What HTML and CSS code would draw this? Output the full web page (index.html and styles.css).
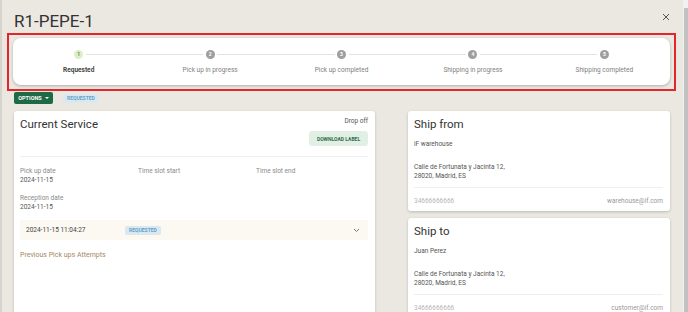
FILE: index.html
```html
<!DOCTYPE html>
<html lang="en">
<head>
    <meta charset="UTF-8">
    <meta name="viewport" content="width=device-width, initial-scale=1.0">
    <title>R1-PEPE-1</title>
    <link rel="stylesheet" href="styles.css">
</head>
<body>
    <div class="page">
        <div class="dialog-header">
            <h1 class="dialog-title">R1-PEPE-1</h1>
            <svg class="dialog-close" width="8" height="8" viewBox="0 0 8 8">
                <path d="M1 1 L7 7 M7 1 L1 7" stroke="#555" stroke-width="1" fill="none"/>
            </svg>
        </div>

        <div class="highlight">
            <div class="stepper">
                <div class="step active">
                    <div class="step-dot">1</div>
                    <div class="step-label">Requested</div>
                </div>
                <div class="step">
                    <div class="step-dot">2</div>
                    <div class="step-label">Pick up in progress</div>
                </div>
                <div class="step">
                    <div class="step-dot">3</div>
                    <div class="step-label">Pick up completed</div>
                </div>
                <div class="step">
                    <div class="step-dot">4</div>
                    <div class="step-label">Shipping in progress</div>
                </div>
                <div class="step">
                    <div class="step-dot">5</div>
                    <div class="step-label">Shipping completed</div>
                </div>
            </div>
        </div>

        <div class="content">
            <div class="toolbar">
                <button class="options-btn">OPTIONS <span class="caret"></span></button>
                <span class="badge">REQUESTED</span>
            </div>

            <div class="columns">
                <div class="card service-card">
                    <div class="service-head">
                        <h2 class="card-title">Current Service</h2>
                        <div class="service-actions">
                            <div class="service-type">Drop off</div>
                            <button class="label-btn">DOWNLOAD LABEL</button>
                        </div>
                    </div>
                    <div class="fields">
                        <div class="field">
                            <div class="field-label">Pick up date</div>
                            <div class="field-value">2024-11-15</div>
                        </div>
                        <div class="field">
                            <div class="field-label">Time slot start</div>
                        </div>
                        <div class="field">
                            <div class="field-label">Time slot end</div>
                        </div>
                        <div class="field">
                            <div class="field-label">Reception date</div>
                            <div class="field-value">2024-11-15</div>
                        </div>
                    </div>
                    <div class="attempt">
                        <span class="attempt-date">2024-11-15 11:04:27</span>
                        <span class="badge">REQUESTED</span>
                        <svg class="chevron" width="7" height="5" viewBox="0 0 7 5">
                            <path d="M1 1 L3.5 3.5 L6 1" stroke="#777" stroke-width="1" fill="none"/>
                        </svg>
                    </div>
                    <div class="previous-link">Previous Pick ups Attempts</div>
                </div>

                <div class="side">
                    <div class="card address-card">
                        <h2 class="card-title">Ship from</h2>
                        <div class="address-name">iF warehouse</div>
                        <div class="address-lines">Calle de Fortunata y Jacinta 12,<br>28020, Madrid, ES</div>
                        <div class="address-foot">
                            <span class="phone">34666666666</span>
                            <span class="email">warehouse@if.com</span>
                        </div>
                    </div>
                    <div class="card address-card">
                        <h2 class="card-title">Ship to</h2>
                        <div class="address-name">Juan Perez</div>
                        <div class="address-lines">Calle de Fortunata y Jacinta 12,<br>28020, Madrid, ES</div>
                        <div class="address-foot">
                            <span class="phone">34666666666</span>
                            <span class="email">customer@if.com</span>
                        </div>
                    </div>
                </div>
            </div>
        </div>
    </div>
    <div class="scrollbar">
        <div class="scroll-thumb"></div>
    </div>
</body>
</html>
```

FILE: styles.css
```css
body {
    margin: 0;
    padding: 0;
    background-color: #ebe8e2;
    font-family: Roboto, "Liberation Sans", sans-serif;
    color: #333;
    display: flex;
    height: 312px;
    overflow: hidden;
}

.page {
    flex: 1;
    border-left: 2px solid #d7d4cd;
    padding: 0 7px 0 5px;
    min-width: 0;
    overflow: hidden;
}

.dialog-header {
    display: flex;
    justify-content: space-between;
    align-items: flex-start;
    height: 33px;
    padding: 0 6px 0 7px;
    box-sizing: border-box;
}

.dialog-title {
    margin: 11px 0 0 0;
    font-size: 17px;
    line-height: 20px;
    font-weight: 400;
    color: #333;
}

.dialog-close {
    margin-top: 13px;
}

/* red outline round the stepper */
.highlight {
    border: 2px solid #e3262b;
    padding: 3px 4px 4px 4px;
}

.stepper {
    background-color: #fff;
    border-radius: 8px;
    box-shadow: 0 1px 3px rgba(0, 0, 0, 0.25);
    height: 47px;
    display: flex;
}

.step {
    flex: 1;
    display: flex;
    flex-direction: column;
    align-items: center;
    padding-top: 12px;
    position: relative;
}

.step:not(:first-child)::before {
    content: '';
    position: absolute;
    top: 16px;
    left: calc(-50% + 7px);
    right: calc(50% + 7px);
    height: 1px;
    background-color: #e2e2e2;
}

.step-dot {
    width: 9px;
    height: 9px;
    border-radius: 50%;
    background-color: #9e9e9e;
    color: #fff;
    font-size: 5px;
    line-height: 9px;
    text-align: center;
    font-weight: 700;
}

.step-label {
    margin-top: 7px;
    font-size: 6.5px;
    line-height: 9px;
    color: #808080;
}

.step.active .step-dot {
    background-color: #dcedc8;
    color: #5a8a3a;
}

.step.active .step-label {
    color: #444;
    font-weight: 700;
}

.content {
    padding: 0 6px 0 7px;
}

.toolbar {
    display: flex;
    align-items: center;
    gap: 10px;
    margin-top: 1px;
    height: 12px;
}

.options-btn {
    height: 12px;
    width: 39px;
    border: none;
    border-radius: 2px;
    background-color: #1e6a47;
    color: #fff;
    font-family: inherit;
    font-size: 5.5px;
    font-weight: 700;
    padding: 0;
    display: flex;
    align-items: center;
    justify-content: center;
    gap: 3px;
}

.caret {
    border-left: 2px solid transparent;
    border-right: 2px solid transparent;
    border-top: 2px solid #fff;
}

.badge {
    display: inline-block;
    background-color: #dce8ef;
    color: #62a3cc;
    font-size: 5px;
    font-weight: 700;
    line-height: 9px;
    padding: 0 4px;
    border-radius: 2px;
}

.columns {
    display: grid;
    grid-template-columns: 361px 1fr;
    gap: 33px;
    margin-top: 7px;
}

.card {
    background-color: #fff;
    border-radius: 3px;
    box-shadow: 0 1px 3px rgba(0, 0, 0, 0.2);
}

.card-title {
    margin: 0;
    font-size: 11.5px;
    line-height: 14px;
    font-weight: 400;
    color: #333;
}

.service-card {
    padding: 6px 7px 0 6px;
    min-height: 230px;
}

.service-head {
    display: flex;
    justify-content: space-between;
    padding-bottom: 10px;
    border-bottom: 1px solid #eeeeee;
}

.service-actions {
    display: flex;
    flex-direction: column;
    align-items: flex-end;
}

.service-type {
    font-size: 6.5px;
    line-height: 9px;
    color: #555;
}

.label-btn {
    margin-top: 5px;
    height: 15px;
    width: 59px;
    border: none;
    border-radius: 3px;
    background-color: #e2efe5;
    color: #2e6b4b;
    font-family: inherit;
    font-size: 5px;
    font-weight: 700;
    padding: 0;
}

.fields {
    display: grid;
    grid-template-columns: 118px 118px 1fr;
    row-gap: 9px;
    margin-top: 10px;
}

.field-label {
    font-size: 6.5px;
    line-height: 9px;
    color: #8a8a8a;
}

.field-value {
    font-size: 6.5px;
    line-height: 9px;
    color: #555;
}

.attempt {
    margin-top: 8px;
    height: 20px;
    background-color: #fcf8f2;
    display: flex;
    align-items: center;
    padding: 0 8px 0 6px;
}

.attempt-date {
    width: 99px;
    font-size: 6.5px;
    color: #444;
}

.chevron {
    margin-left: auto;
}

.previous-link {
    margin-top: 10px;
    font-size: 7px;
    line-height: 10px;
    color: #a3895f;
}

.side {
    display: flex;
    flex-direction: column;
    gap: 7px;
}

.address-card {
    padding: 6px 7px 5px 6px;
    font-size: 6.5px;
    line-height: 9px;
    color: #555;
}

.address-name {
    margin-top: 9px;
}

.address-lines {
    margin-top: 14px;
    padding-bottom: 6px;
    border-bottom: 1px solid #eeeeee;
}

.address-foot {
    display: flex;
    justify-content: space-between;
    margin-top: 9px;
}

.phone {
    color: #b5b5b5;
}

.email {
    color: #999;
}

.scrollbar {
    width: 5px;
    background-color: #f1f1f1;
    display: flex;
    justify-content: flex-end;
}

.scroll-thumb {
    width: 4px;
    margin-top: 8px;
    background-color: #c1c1c1;
}
```
